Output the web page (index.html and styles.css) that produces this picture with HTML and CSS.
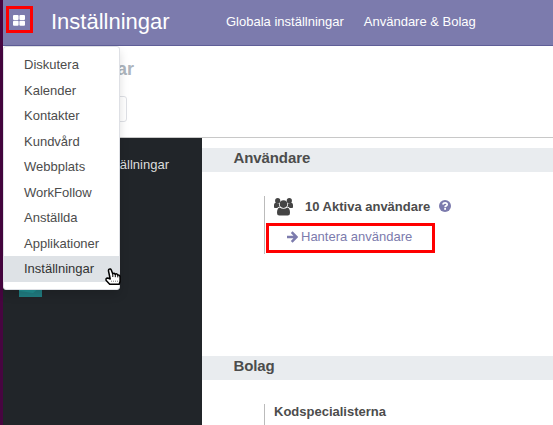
FILE: index.html
```html
<!DOCTYPE html>
<html lang="sv">
<head>
<meta charset="utf-8">
<title>Inställningar</title>
<link rel="stylesheet" href="styles.css">
</head>
<body>
<div class="window">
  <header class="navbar">
    <button class="apps-button" aria-label="Appar">
      <svg width="12" height="11" viewBox="0 0 12 11" fill="#fff"><rect width="5.6" height="5" rx="1"/><rect x="6.4" width="5.6" height="5" rx="1"/><rect y="5.8" width="5.6" height="5" rx="1"/><rect x="6.4" y="5.8" width="5.6" height="5" rx="1"/></svg>
    </button>
    <h1 class="brand">Inställningar</h1>
    <nav class="sections"><a>Globala inställningar</a><a>Användare &amp; Bolag</a></nav>
    <div class="menu">
      <a>Diskutera</a><a>Kalender</a><a>Kontakter</a><a>Kundvård</a><a>Webbplats</a><a>WorkFollow</a><a>Anställda</a><a>Applikationer</a><a class="active">Inställningar</a>
      <svg class="pointer" width="17" height="18" viewBox="0 0 17 18"><path d="M4.2 1.2Q5.6.4 6.3 2L7.7 5.8Q9.2 4.3 10.2 6.3Q11.9 5.1 12.7 7.1Q14.9 6.6 15.1 9V13.2L14.2 16.3H4.7L1.2 12.6Q.4 9.9 2.8 10L5.2 11L3.5 3Q3.3 1.7 4.2 1.2Z" fill="#fff" stroke="#000" stroke-width="1.5" stroke-linejoin="round"/><path d="M7.8 6v3M10.3 6.4v2.8M12.8 7.2v2.2" stroke="#000"/><path d="M6 13.2h8" stroke="#777" stroke-dasharray="1 1"/></svg>
    </div>
  </header>
  <section class="control-panel">
    <h2 class="page-title">ar</h2>
    <div class="action-button"></div>
  </section>
  <main class="workspace">
    <aside class="sidebar">
      <div class="side-title">tällningar</div>
      <svg class="app-icon" width="23" height="23" viewBox="0 0 23 23"><rect width="23" height="23" fill="#218f91"/><path d="M0 17L14 19L20 14V0H23V23H0Z" fill="#207c80"/></svg>
    </aside>
    <div class="content">
      <section class="group users">
        <h3>Användare</h3>
        <div class="setting">
          <div class="setting-title">
            <svg class="people" width="19" height="18" viewBox="0 0 19 18" fill="#444"><circle cx="3.7" cy="2.7" r="2.6"/><circle cx="15.3" cy="2.7" r="2.6"/><path d="M0 9.2V7Q0 5 1.5 4.8L5 5.4Q4.7 7.5 5.9 8.8Q4.3 8.7 3.2 9.9H1Q0 9.9 0 9.2ZM19 9.2V7Q19 5 17.5 4.8L14 5.4Q14.3 7.5 13.1 8.8Q14.7 8.7 15.8 9.9H18Q19 9.9 19 9.2Z"/><circle cx="9.5" cy="6.1" r="3.8"/><path d="M5.6 9.5Q9.5 12.2 13.4 9.5Q16 10.2 16 15Q16 17.6 13.7 17.6H5.3Q3 17.6 3 15Q3 10.2 5.6 9.5Z"/></svg>
            <strong>10 Aktiva användare</strong>
            <svg class="help" width="12" height="12" viewBox="0 0 12 12"><circle cx="6" cy="6" r="6" fill="#7c7bad"/><path d="M3.8 4.5Q4.2 2.8 6.1 2.8Q8.2 2.8 8.2 4.5Q8.2 5.4 7.1 5.9Q6.1 6.3 6.1 7.2" fill="none" stroke="#fff" stroke-width="1.7"/><rect x="5.2" y="8" width="1.8" height="1.8" fill="#fff"/></svg>
          </div>
          <a class="manage">
            <svg width="11" height="12" viewBox="0 0 11 12" fill="none" stroke="#7c7bad" stroke-width="2.5"><path d="M0 6H9M4.7 1.2L9.5 6L4.7 10.8"/></svg>
            <span>Hantera användare</span>
          </a>
        </div>
      </section>
      <section class="group">
        <h3>Bolag</h3>
        <div class="setting company"><strong>Kodspecialisterna</strong></div>
      </section>
    </div>
  </main>
</div>
</body>
</html>
```
FILE: styles.css
```css
* { box-sizing: border-box; }
body { margin: 0; font: 13px/20px "Liberation Sans", Arial, sans-serif; color: #4c4c4c; }
.window { height: 425px; border-left: 3px solid #470540; display: flex; flex-direction: column; background: #fff; }
.navbar { height: 46px; flex: none; background: #7c7bad; border-bottom: 1px solid #5f5e97; display: flex; align-items: flex-start; color: #fff; position: relative; }
.apps-button { width: 27px; height: 27px; margin: 6px 0 0 3px; padding: 1px 1px 0 0; border: 3px solid #f00; background: none; display: flex; align-items: center; justify-content: center; }
.brand { margin: 9px 0 0 18px; width: 121px; font-size: 22px; line-height: 26px; font-weight: 400; }
.sections { display: flex; gap: 20px; margin: 12px 0 0 54px; white-space: nowrap; }
.menu { position: absolute; z-index: 2; left: 0; top: 46px; width: 117px; height: 244px; padding: 5px 0; background: #fff; border: 1px solid #dee0e5; border-radius: 3px; box-shadow: 0 5px 10px #0002; color: #4c4c4c; }
.menu a { display: block; height: 25.5px; line-height: 25px; padding-left: 20px; }
.menu .active { height: 26px; background: #dee2e6; color: #333; }
.pointer { position: absolute; left: 101px; top: 221px; }
.control-panel { height: 92px; flex: none; border-bottom: 1px solid #c8c8c8; }
.page-title { width: 131px; margin: 11px 0 0; font-size: 18px; line-height: 24px; color: #adb5bd; text-align: right; }
.action-button { width: 104px; height: 26px; margin: 15px 0 0 20px; border: 1px solid #dee0e5; border-radius: 3px; }
.workspace { display: flex; flex: 1; min-height: 0; }
.sidebar { width: 199px; background: #212529; color: #ddd; }
.side-title { width: 166px; margin-top: 17px; text-align: right; }
.app-icon { display: block; margin: 99px 0 0 16px; }
.content { flex: 1; padding-top: 10px; }
.group h3 { height: 24px; margin: 0; padding-left: 31.5px; background: #e9ecef; font-size: 15px; line-height: 20px; letter-spacing: -.1px; }
.users { height: 208px; }
.setting { height: 58px; margin: 24px 0 0 62px; border-left: 1px solid #bbb; position: relative; }
.setting-title { display: flex; align-items: flex-start; padding-left: 10px; }
.people { margin: 2px 0 0 -1px; }
.setting-title strong { margin-left: 12px; line-height: 21px; }
.help { margin: 4px 0 0 9px; }
.manage { display: flex; align-items: center; position: absolute; left: 1px; top: 27px; width: 169px; height: 30px; padding: 0 0 3px 18px; border: 3px solid #f00; color: #7c7bad; }
.manage span { margin-left: 3px; }
.company { height: 21px; padding-left: 9px; line-height: 15px; }
```
